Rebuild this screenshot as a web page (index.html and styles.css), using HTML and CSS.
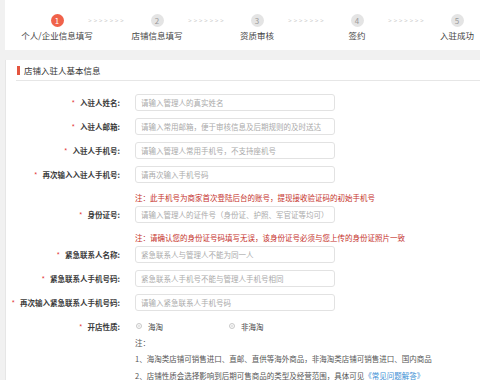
FILE: index.html
```html
<!DOCTYPE html>
<html lang="zh-CN">
<head>
  <meta charset="UTF-8" />
  <title>商家入驻</title>
  <link rel="stylesheet" href="styles.css">
</head>
<body>
  <!-- 入驻步骤 -->
  <div class="steps">
    <div class="step-track">
      <span class="dot on">1</span><span class="arrows">&gt;&gt;&gt;&gt;&gt;&gt;&gt;</span>
      <span class="dot">2</span><span class="arrows">&gt;&gt;&gt;&gt;&gt;&gt;&gt;</span>
      <span class="dot">3</span><span class="arrows">&gt;&gt;&gt;&gt;&gt;&gt;&gt;</span>
      <span class="dot">4</span><span class="arrows">&gt;&gt;&gt;&gt;&gt;&gt;&gt;</span>
      <span class="dot">5</span>
    </div>
    <div class="step-names">
      <span>个人/企业信息填写</span>
      <span>店铺信息填写</span>
      <span>资质审核</span>
      <span>签约</span>
      <span>入驻成功</span>
    </div>
  </div>

  <!-- 基本信息 -->
  <div class="panel">
    <h3 class="panel-title">店铺入驻人基本信息</h3>
    <form class="form">
      <div class="row">
        <label><i class="star">*</i>入驻人姓名:</label>
        <input type="text" placeholder="请输入管理人的真实姓名">
      </div>
      <div class="row">
        <label><i class="star">*</i>入驻人邮箱:</label>
        <input type="text" placeholder="请输入常用邮箱，便于审核信息及后期规则的及时送达">
      </div>
      <div class="row">
        <label><i class="star">*</i>入驻人手机号:</label>
        <input type="text" placeholder="请输入管理人常用手机号，不支持座机号">
      </div>
      <div class="row">
        <label><i class="star">*</i>再次输入入驻人手机号:</label>
        <input type="text" placeholder="请再次输入手机号码">
      </div>
      <p class="note">注：此手机号为商家首次登陆后台的账号，提现接收验证码的初始手机号</p>
      <div class="row">
        <label><i class="star">*</i>身份证号:</label>
        <input type="text" placeholder="请输入管理人的证件号（身份证、护照、军官证等均可）">
      </div>
      <p class="note">注：请确认您的身份证号码填写无误，该身份证号必须与您上传的身份证照片一致</p>
      <div class="row">
        <label><i class="star">*</i>紧急联系人名称:</label>
        <input type="text" placeholder="紧急联系人与管理人不能为同一人">
      </div>
      <div class="row">
        <label><i class="star">*</i>紧急联系人手机号码:</label>
        <input type="text" placeholder="紧急联系人手机号不能与管理人手机号相同">
      </div>
      <div class="row">
        <label><i class="star">*</i>再次输入紧急联系人手机号码:</label>
        <input type="text" placeholder="请输入紧急联系人手机号码">
      </div>
      <div class="row radio-row">
        <label><i class="star">*</i>开店性质:</label>
        <div class="radios">
          <span class="radio"><b></b>海淘</span>
          <span class="radio"><b></b>非海淘</span>
        </div>
      </div>
      <div class="tips">
        <p>注：</p>
        <p>1、海淘类店铺可销售进口、直邮、直供等海外商品，非海淘类店铺可销售进口、国内商品</p>
        <p>2、店铺性质会选择影响到后期可售商品的类型及经营范围，具体可见<a href="#">《常见问题解答》</a></p>
      </div>
    </form>
  </div>
</body>
</html>
```

FILE: styles.css
```css
* {
  box-sizing: border-box;
}

body {
  margin: 0;
  background: #f1f1f1;
  font-family: "Noto Sans CJK SC", "Noto Sans", sans-serif;
  color: #333;
  overflow: hidden;
}

/* 步骤条 */
.steps {
  margin-left: 5px;
  height: 50px;
  background: #fff;
  overflow: hidden;
}

.step-track {
  display: flex;
  align-items: center;
  padding: 14px 0 0 45.5px;
}

.dot {
  flex: none;
  width: 13px;
  height: 13px;
  border-radius: 50%;
  background: #e4e4e4;
  color: #999;
  font-size: 8px;
  line-height: 13px;
  text-align: center;
}

.dot.on {
  background: #f0624a;
  color: #fff;
}

.arrows {
  flex: none;
  width: 87px;
  text-align: center;
  font-size: 6px;
  letter-spacing: 2px;
  color: #c8c8c8;
}

.step-names {
  display: flex;
  margin: 2px 0 0 2px;
}

.step-names span {
  flex: none;
  width: 100px;
  text-align: center;
  font-size: 8.5px;
  line-height: 12px;
  color: #444;
}

/* 表单面板 */
.panel {
  margin: 10px 0 0 5px;
  background: #fff;
  border-left: 1px solid #e6e6e6;
  min-height: 330px;
}

.panel-title {
  margin: 3px 0 0 10px;
  height: 21px;
  line-height: 20px;
  padding-left: 1px;
  border-bottom: 1px solid #e6e6e6;
  font-size: 8.5px;
  font-weight: normal;
  color: #333;
}

.panel-title::before {
  content: "";
  display: inline-block;
  width: 3px;
  height: 9px;
  margin-right: 4px;
  background: #e4553f;
  vertical-align: -1px;
}

.form {
  padding-top: 12.5px;
  margin: 0;
}

.row {
  display: flex;
  align-items: center;
  height: 17px;
  margin-bottom: 7px;
}

.row label {
  flex: none;
  width: 114px;
  text-align: right;
  font-size: 7.5px;
  font-weight: bold;
  color: #3a3a3a;
}

.star {
  font-style: normal;
  font-weight: normal;
  color: #e4393c;
  margin-right: 5px;
}

.row input {
  margin-left: 15px;
  width: 200px;
  height: 17px;
  padding: 0 5px;
  border: 1px solid #e2e2e2;
  border-radius: 3px;
  font-family: inherit;
  font-size: 7.5px;
  outline: none;
}

.row input::placeholder {
  color: #aaa;
}

.note {
  margin: 0;
  padding-left: 129px;
  line-height: 16px;
  font-size: 7.5px;
  color: #c5302a;
}

.radio-row {
  margin-bottom: 0;
}

.radios {
  display: flex;
  margin-left: 16px;
  font-size: 7.5px;
  color: #444;
}

.radio {
  display: flex;
  align-items: center;
  width: 93px;
}

.radio b {
  width: 6px;
  height: 6px;
  margin-right: 6px;
  border: 1px solid #c8c8c8;
  border-radius: 50%;
  box-shadow: inset 0 0 0 1px #fff, inset 0 0 0 3px #ddd;
}

.tips {
  padding-left: 129px;
  font-size: 7.5px;
  color: #555;
}

.tips p {
  margin: 0;
  line-height: 16.5px;
}

.tips a {
  color: #3a8ed4;
  text-decoration: none;
}
```
